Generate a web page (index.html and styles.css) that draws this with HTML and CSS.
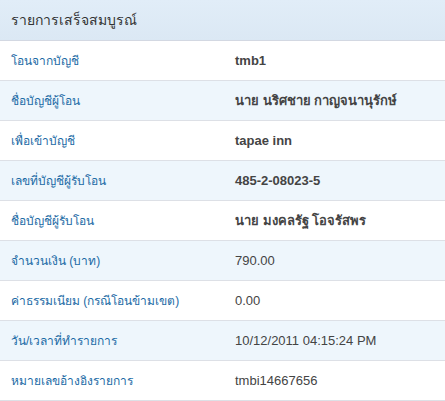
FILE: index.html
```html
<!DOCTYPE html>
<html lang="th">
<head>
<meta charset="utf-8">
<title>รายการเสร็จสมบูรณ์</title>
<link rel="stylesheet" href="styles.css">
</head>
<body>
<div class="panel">
  <div class="head">รายการเสร็จสมบูรณ์</div>
  <div class="row"><span class="label">โอนจากบัญชี</span><span class="value bold">tmb1</span></div>
  <div class="row alt"><span class="label">ชื่อบัญชีผู้โอน</span><span class="value bold">นาย นริศชาย กาญจนานุรักษ์</span></div>
  <div class="row"><span class="label">เพื่อเข้าบัญชี</span><span class="value bold">tapae inn</span></div>
  <div class="row alt"><span class="label">เลขที่บัญชีผู้รับโอน</span><span class="value bold">485-2-08023-5</span></div>
  <div class="row"><span class="label">ชื่อบัญชีผู้รับโอน</span><span class="value bold">นาย มงคลรัฐ โอจรัสพร</span></div>
  <div class="row alt"><span class="label">จำนวนเงิน (บาท)</span><span class="value">790.00</span></div>
  <div class="row"><span class="label">ค่าธรรมเนียม (กรณีโอนข้ามเขต)</span><span class="value">0.00</span></div>
  <div class="row alt"><span class="label">วัน/เวลาที่ทำรายการ</span><span class="value">10/12/2011 04:15:24 PM</span></div>
  <div class="row"><span class="label">หมายเลขอ้างอิงรายการ</span><span class="value">tmbi14667656</span></div>
</div>
</body>
</html>
```
FILE: styles.css
```css
html, body {
  margin: 0;
  padding: 0;
  background: #ffffff;
}
body {
  font-family: "Liberation Sans", "DejaVu Sans", sans-serif;
  font-size: 13px;
}
.panel {
  width: 445px;
}
.head {
  height: 41px;
  box-sizing: border-box;
  display: flex;
  align-items: center;
  padding-left: 11px;
  background: linear-gradient(#e1edf8, #dbe8f4);
  border-bottom: 1px solid #d3d8e2;
  color: #333333;
  font-size: 14px;
}
.row {
  display: grid;
  grid-template-columns: 224px 1fr;
  align-items: center;
  height: 40px;
  box-sizing: border-box;
  padding-left: 11px;
  border-bottom: 1px solid #dde0e6;
  background: #ffffff;
}
.row.alt {
  background: #eef6fc;
}
.label {
  color: #1b6aa5;
  font-size: 12px;
}
.value {
  color: #444444;
}
.value.bold {
  font-weight: bold;
}
```
